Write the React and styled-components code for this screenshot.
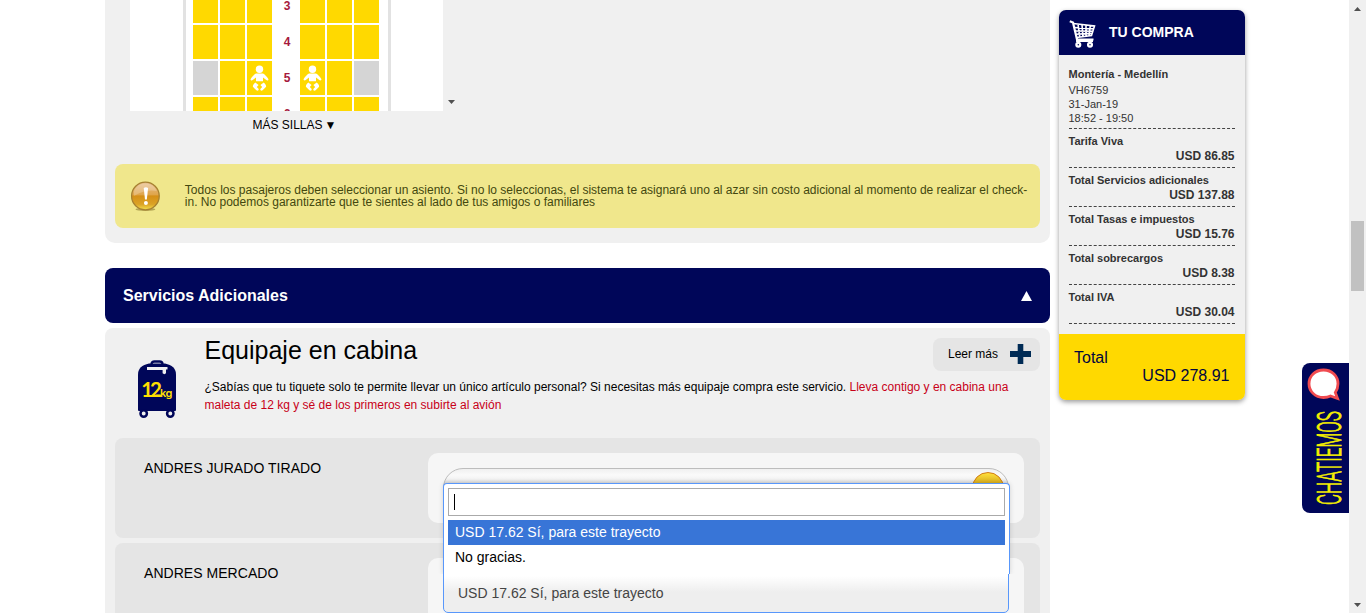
import React from "react";
import styled, { createGlobalStyle } from "styled-components";

const Global = createGlobalStyle`
  * { box-sizing: border-box; }
  body { margin: 0; background: #fff; font-family: "Liberation Sans", Arial, sans-serif; font-size: 12px; color: #000; overflow: hidden; }
`;
const Page = styled.div`
  display: flex; align-items: flex-start; width: 1366px; height: 613px; overflow: hidden; padding-left: 105px;
`;
const Main = styled.main`width: 945px; flex: none;`;
const SeatPanel = styled.section`
  height: 243px; background: #f0f0f0; border-radius: 0 0 10px 10px; padding: 0 10px;
`;
const SeatViewport = styled.div`display: flex; align-items: flex-end; height: 111px; padding-left: 15px;`;
const SeatArea = styled.div`
  width: 313px; height: 111px; background: #fff; overflow: hidden; padding-left: 53px;
`;
const Fuselage = styled.div`
  width: 208px; border: solid #e2e2e2; border-width: 0 3px; padding: 0 0 0 7px; height: 180px; margin-top: -11px;
  display: flex; flex-direction: column; gap: 2px;
`;
const SeatRow = styled.div`display: flex; gap: 2px; height: 34px; flex: none;`;
const Seat = styled.div`
  width: 25px; height: 34px; background: ${(p) => (p.$taken ? "#d5d5d5" : "#ffd900")};
  display: flex; align-items: center; justify-content: center;
`;
const RowNumber = styled.div`
  width: 24px; text-align: center; line-height: 34px; font-size: 12px; font-weight: 700; color: #a6193c;
  padding-left: 2px;
`;
const ScrollHint = styled.svg`width: 7px; height: 4px; margin: 0 0 7px 5px; display: block;`;
const MoreSeats = styled.div`
  margin: 7px 0 0 137.5px; line-height: 14px; font-size: 12px; height: 46px; display: flex; gap: 2px;
`;
const Notice = styled.div`
  height: 64px; background: #f0e78c; border-radius: 8px; display: flex; align-items: center; padding: 0 10px 0 15px; gap: 24px;
  color: #43480f; line-height: 12px;
`;
const NoticeText = styled.p`margin: 0; width: 850px;`;
const SectionHeader = styled.h2`
  margin: 25px 0 5px; height: 55px; border-radius: 8px; background: #000659; color: #fff; display: flex; align-items: center;
  justify-content: space-between; padding: 0 18px; font-size: 16px;
`;
const Services = styled.section`height: 320px; background: #f0f0f0; border-radius: 8px 8px 0 0; padding: 0 10px;`;
const Intro = styled.div`display: flex; height: 110px;`;
const BagCell = styled.div`width: 89.5px; padding: 31px 0 0 23px; flex: none;`;
const IntroBody = styled.div`flex: 1;`;
const IntroTop = styled.div`display: flex; justify-content: space-between; height: 50px;`;
const ServiceTitle = styled.h3`margin: 7px 0 0; font-size: 25px; line-height: 30px; font-weight: 400;`;
const ReadMore = styled.button`
  margin: 10px 0 0; width: 107px; height: 33px; border: 0; border-radius: 8px; background: #e5e5e5; display: flex; align-items: center;
  justify-content: space-between; padding: 0 9px 2px 15px; font: 12px "Liberation Sans", Arial, sans-serif; color: #000;
`;
const Description = styled.p`margin: 0; line-height: 18px; width: 820px;`;
const Accent = styled.span`color: #c80018;`;
const Passenger = styled.div`
  height: 100px; margin-bottom: 5px; border-radius: 8px; background: #e5e5e5; display: flex; justify-content: space-between; padding: 15px 16px 15px 29px;
`;
const PassengerName = styled.div`font-size: 14px; line-height: 16px; padding-top: 7px; letter-spacing: 0.04px;`;
const ChoiceBox = styled.div`width: 596px; height: 70px; background: #f6f6f6; border-radius: 10px; padding: 15px;`;
const Select = styled.div`
  position: relative; width: 566px; height: 40px; font-size: 14px; border: 1px solid ${(p) => (p.$open ? "#bdbdbd" : "#5897fb")};
  border-radius: ${(p) => (p.$open ? "20px" : "0 0 5px 5px")};
  background: ${(p) => (p.$open ? "linear-gradient(#f0f0f0 0, #fafafa 6px, #f3f3f3 10px, #ccc 16px)" : "linear-gradient(#fff 0, #fff 2px, #eee 18px)")};
`;
const Selected = styled.div`color: #444; line-height: 38px; padding-left: 14px;`;
const CoinButton = styled.i`
  display: block; width: 32px; height: 32px; margin: 3px 0 0 528px; border-radius: 50%; border: 1.5px solid #d17b12;
  background: linear-gradient(#ffe03c, #d8ae20 10px, #e2a800);
`;
const Dropdown = styled.div`
  position: absolute; z-index: 3; top: 14px; left: -1px; width: 567px; height: 91px; background: #fff; border: solid #5897fb; border-width: 1px 1px 0;
  border-radius: 4px 4px 0 0; padding: 4px; box-shadow: 0 0 5px rgba(0,0,0,.15); clip-path: inset(-6px -6px 0 -6px);
`;
const Search = styled.div`height: 28px; border: 1px solid #aaa; padding: 5px; margin-bottom: 4px;`;
const Caret = styled.i`display: block; width: 1px; height: 16px; background: #000;`;
const Option = styled.div`
  height: 25px; line-height: 25px; padding-left: 7px; color: ${(p) => (p.$active ? "#fff" : "#000")};
  background: ${(p) => (p.$active ? "#3875d7" : "#fff")};
`;
const Summary = styled.aside`
  width: 186px; height: 390px; margin: 10px 0 0 9px; border-radius: 7px; overflow: hidden; background: #f0f0f0; color: #333;
  box-shadow: 0 2px 5px rgba(0,0,0,.4); flex: none;
`;
const SummaryHeader = styled.header`
  height: 45px; background: #000659; color: #fff; display: flex; align-items: center; gap: 13px; padding: 3px 0 0 10px; font-size: 14px; font-weight: 700;
`;
const SummaryTitle = styled.span`padding-bottom: 4px;`;
const SummaryBody = styled.div`height: 279px; padding: 12px 10px 0 9.5px; font-size: 11px; line-height: 14px;`;
const Flight = styled.div`height: 62px; border-bottom: 1px dashed #444;`;
const Route = styled.b`display: block; height: 16px; line-height: 15px;`;
const Charge = styled.div`height: 39px; border-bottom: 1px dashed #444; padding-top: 5px; font-weight: 700; line-height: 14px;`;
const Amount = styled.div`text-align: right; font-size: 12px; line-height: 15px; padding-top: 1px; margin-right: 0.5px;`;
const GrandTotal = styled.div`
  height: 66px; background: #ffd900; color: #00063f; font-size: 16px; line-height: 18px; padding: 15px 15.5px 0 15px;
`;
const TotalAmount = styled.div`text-align: right;`;
const ChatTab = styled.div`
  width: 47px; height: 150px; margin: 363px 0 0 57px; background: #000659; border-radius: 8px 0 0 8px; flex: none;
`;
const ScrollTrack = styled.div`
  width: 17px; height: 613px; background: #f0f0f0; display: flex; flex-direction: column; align-items: center; flex: none;
  padding: 7px 0 6px;
`;
const Thumb = styled.div`width: 13px; height: 70px; background: #c1c1c1; margin: 210px 0 312px; flex: none;`;

const Baby = () => (
  <svg width="19" height="27" viewBox="0 0 19 27" fill="#fff">
    <circle cx="9.5" cy="4.3" r="3.7" />
    <path d="M6 8.6h7c1.5.6 4.2 3.5 5.2 5.2.8 1.3-.8 2.200-1.900 1.300L13 12.600v3.600H6v-3.600l-3.300 2.500c-1.100.9-2.700 0-1.900-1.300C1.800 12.100 4.500 9.200 6 8.600Z" />
    <path d="M5.300 17.500 8.600 20l-1.800 2.100 1.700 1.700c.8 1.500-.9 2.600-2.100 1.500L3.100 22c-.7-1 .2-2.600 2.200-4.500ZM13.700 17.500 10.400 20l1.800 2.100-1.700 1.700c-.8 1.500.9 2.600 2.100 1.500l3.300-3.300c.7-1-.2-2.600-2.200-4.500Z" />
  </svg>
);
const Warning = () => (
  <svg width="31" height="31" viewBox="0 0 31 31">
    <defs>
      <linearGradient id="amber" x1="0" y1="0" x2="0" y2="1">
        <stop offset="0" stopColor="#e8c090" /><stop offset=".45" stopColor="#dfa54b" />
        <stop offset=".5" stopColor="#d58f17" /><stop offset=".8" stopColor="#dba326" /><stop offset="1" stopColor="#f5e04c" />
      </linearGradient>
    </defs>
    <ellipse cx="15.5" cy="28.5" rx="10" ry="1.5" fill="#8c7a30" opacity=".6" />
    <circle cx="15.5" cy="15" r="13.9" fill="url(#amber)" stroke="#a68031" strokeWidth="1.3" />
    <path d="M4 10a12.500 12.500 0 0 1 23 0q-11-2-23 5Z" fill="#fff" opacity=".22" />
    <path d="M13.800 7q2.200-1.600 4.400 0l-1.300 11.500h-1.800Z" fill="#fff" />
    <circle cx="16" cy="22" r="2" fill="#fff" />
  </svg>
);
const Suitcase = () => (
  <svg width="38" height="60" viewBox="0 0 38 60">
    <path d="M13.500 5.500v-.5q0-2.500 3-2.500h5q3 0 3 2.500v.5" fill="none" stroke="#000659" strokeWidth="2.300" />
    <path d="M11 4.500h16C34 6 38 9.500 38 15.500V51q0 1-1 1H1q-1 0-1-1V15.500C0 9.500 4 6 11 4.500Z" fill="#000659" />
    <path d="M9 8h20.500v2.500H28v3.800l-1.700 1-1.700-1v-3.300H9Z" fill="#f0f0f0" />
    <circle cx="5.700" cy="54.500" r="3.200" fill="#f0f0f0" stroke="#000659" strokeWidth="2.500" />
    <circle cx="32.300" cy="54.500" r="3.200" fill="#f0f0f0" stroke="#000659" strokeWidth="2.500" />
    <g fontWeight="700" fill="#ffe000">
      <text x="3.200" y="37.500" fontFamily="Lato" fontSize="20.500" letterSpacing="-3">12</text>
      <text x="22" y="37.500" fontFamily="Inter" fontWeight="600" fontSize="11" letterSpacing="-.6">kg</text>
    </g>
  </svg>
);
const Cart = () => (
  <svg width="27" height="28" viewBox="0 0 27 28" fill="none" stroke="#fff">
    <path d="M.8 1.200 4 2.500 8 19.500h16.500" strokeWidth="2.200" />
    <path d="M4 3.500 25.500 6 22.500 15.500 7.500 17.500M5 7.500l19.500 1.200M6 11l17.500.2M7 14.200l16-.8M9 4.200l1.800 13M13 4.700l1 12.300M17 5.200v11.300M21.300 5.600 20 15.800" strokeWidth="1.600" />
    <path d="M8 17.500v3.500h16" strokeWidth="1.900" />
    <circle cx="9.300" cy="24.700" r="1.900" strokeWidth="2.300" />
    <circle cx="21" cy="24.700" r="1.900" strokeWidth="2.300" />
  </svg>
);
const Plus = () => (
  <svg width="21" height="20" viewBox="0 0 21 20"><path d="M7.700 0h5.600v7H21v6h-7.700v7H7.700v-7H0V7h7.700Z" fill="#002b55" /></svg>
);
const Chat = () => (
  <svg width="47" height="150" viewBox="0 0 47 150">
    <path d="M21.500 7C13 7 7 13.300 7 20.700S13 34.500 21.500 34.500q4 0 7-1.500l7 2.500-2.200-6q2.700-4 2.700-8.800C36 13.300 30 7 21.500 7Z" fill="#fff" stroke="#f04b50" strokeWidth="2.800" />
    <text transform="translate(38.500 142) rotate(-90)" fontFamily="Roboto" fontWeight="300" fontSize="34" fill="#f5f000" stroke="#f5f000" strokeWidth=".9" textLength="94" lengthAdjust="spacingAndGlyphs">CHATIEMOS</text>
  </svg>
);
const Triangle = ({ down, color = "#505050", w = 7, h = 4 }) => (
  <svg width={w} height={h} viewBox="0 0 10 10" preserveAspectRatio="none">
    <path d={down ? "M0 0h10L5 10Z" : "M0 10h10L5 0Z"} fill={color} />
  </svg>
);

const rows = [
  { n: 3 },
  { n: 4 },
  { n: 5, taken: [0, 5], babies: [2, 3] },
  { n: 6 },
];
const charges = [
  ["Tarifa Viva", "USD 86.85"],
  ["Total Servicios adicionales", "USD 137.88"],
  ["Total Tasas e impuestos", "USD 15.76"],
  ["Total sobrecargos", "USD 8.38"],
  ["Total IVA", "USD 30.04"],
];

const SeatLine = ({ n, taken = [], babies = [] }) => {
  const seat = (i) => <Seat key={i} $taken={taken.includes(i)}>{babies.includes(i) && <Baby />}</Seat>;
  return <SeatRow>{[0, 1, 2].map(seat)}<RowNumber>{n}</RowNumber>{[3, 4, 5].map(seat)}</SeatRow>;
};

export default function App() {
  return (
    <Page>
      <Global />
      <Main>
        <SeatPanel>
          <SeatViewport>
            <SeatArea>
              <Fuselage>{rows.map((r) => <SeatLine key={r.n} {...r} />)}</Fuselage>
            </SeatArea>
            <ScrollHint viewBox="0 0 7 4"><path d="M0 0h7L3.500 4Z" fill="#505050" /></ScrollHint>
          </SeatViewport>
          <MoreSeats>MÁS SILLAS <span>▼</span></MoreSeats>
          <Notice>
            <Warning />
            <NoticeText>
              Todos los pasajeros deben seleccionar un asiento. Si no lo seleccionas, el sistema te asignará uno al azar sin costo adicional al momento de realizar el check-in. No podemos garantizarte que te sientes al lado de tus amigos o familiares
            </NoticeText>
          </Notice>
        </SeatPanel>
        <SectionHeader>Servicios Adicionales<Triangle color="#fff" w={11} h={10} /></SectionHeader>
        <Services>
          <Intro>
            <BagCell><Suitcase /></BagCell>
            <IntroBody>
              <IntroTop>
                <ServiceTitle>Equipaje en cabina</ServiceTitle>
                <ReadMore>Leer más<Plus /></ReadMore>
              </IntroTop>
              <Description>
                ¿Sabías que tu tiquete solo te permite llevar un único artículo personal? Si necesitas más equipaje compra este servicio.{" "}
                <Accent>Lleva contigo y en cabina una maleta de 12 kg y sé de los primeros en subirte al avión</Accent>
              </Description>
            </IntroBody>
          </Intro>
          <Passenger>
            <PassengerName>ANDRES JURADO TIRADO</PassengerName>
            <ChoiceBox>
              <Select $open>
                <CoinButton />
                <Dropdown>
                  <Search><Caret /></Search>
                  <Option $active>USD 17.62 Sí, para este trayecto</Option>
                  <Option>No gracias.</Option>
                </Dropdown>
              </Select>
            </ChoiceBox>
          </Passenger>
          <Passenger>
            <PassengerName>ANDRES MERCADO</PassengerName>
            <ChoiceBox>
              <Select><Selected>USD 17.62 Sí, para este trayecto</Selected></Select>
            </ChoiceBox>
          </Passenger>
        </Services>
      </Main>
      <Summary>
        <SummaryHeader><Cart /><SummaryTitle>TU COMPRA</SummaryTitle></SummaryHeader>
        <SummaryBody>
          <Flight>
            <Route>Montería - Medellín</Route>
            <div>VH6759</div>
            <div>31-Jan-19</div>
            <div>18:52 - 19:50</div>
          </Flight>
          {charges.map(([name, value]) => (
            <Charge key={name}>{name}<Amount>{value}</Amount></Charge>
          ))}
        </SummaryBody>
        <GrandTotal>Total<TotalAmount>USD 278.91</TotalAmount></GrandTotal>
      </Summary>
      <ChatTab><Chat /></ChatTab>
      <ScrollTrack><Triangle /><Thumb /><Triangle down /></ScrollTrack>
    </Page>
  );
}
